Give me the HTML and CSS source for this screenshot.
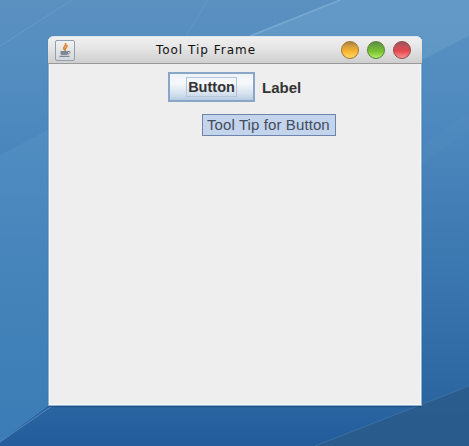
FILE: index.html
```html
<!DOCTYPE html>
<html lang="en">
<head>
    <meta charset="UTF-8">
    <meta name="viewport" content="width=device-width, initial-scale=1.0">
    <title>Tool Tip Frame</title>
    <link rel="stylesheet" href="styles.css">
</head>
<body>

    <div class="desktop">
        <!-- wallpaper streaks -->
        <svg class="wallpaper" viewBox="0 0 469 446" width="469" height="446">
            <defs>
                <linearGradient id="leftBand" x1="0" y1="0" x2="0" y2="1">
                    <stop offset="0" stop-color="#5b9bcb" stop-opacity="0.3"/>
                    <stop offset="1" stop-color="#4a90c8" stop-opacity="0.6"/>
                </linearGradient>
            </defs>
            <path d="M250 36L340 0H469V36L422 60V36Z" fill="#6fa3cc" opacity="0.45"/>
            <path d="M0 46L72 0" stroke="#8bb8da" stroke-width="1" fill="none" opacity="0.3"/>
            <path d="M186 36L208 0" stroke="#7eabd0" stroke-width="1" fill="none" opacity="0.3"/>
            <path d="M250 36L340 0" stroke="#8fbbdc" stroke-width="1.5" fill="none" opacity="0.55"/>
            <path d="M0 155L48 130V406L0 442Z" fill="url(#leftBand)"/>
            <path d="M422 146L469 112V130L422 165Z" fill="#5a8fbe" opacity="0.2"/>
            <path d="M0 442L52 406" stroke="#7fb0d6" stroke-width="1" fill="none" opacity="0.5"/>
            <path d="M315 446L469 386V446Z" fill="#2a5a8a" opacity="0.85"/>
            <path d="M315 446L469 386" stroke="#4d83b5" stroke-width="1" fill="none" opacity="0.5"/>
        </svg>

        <div class="frame">
            <div class="titlebar">
                <div class="app-icon">
                    <svg viewBox="0 0 16 16" width="16" height="16">
                        <path d="M8.5 1C9.8 3.5 6.3 4.5 6.8 6.5C7.1 7.6 8 8.2 8 8.2C7.6 6.5 10.8 5 10 3" fill="none" stroke="#dc7a30" stroke-width="1.5"/>
                        <path d="M3.5 9H11V11.5C11 12.5 10 13 9 13H5.5C4.5 13 3.5 12.5 3.5 11.5Z" fill="#7d8795"/>
                        <path d="M11 9.5H12.5C13.5 9.5 13.5 11.5 11 12" fill="none" stroke="#6b7f93"/>
                        <path d="M2.5 14.3H12.5" stroke="#5f7387" stroke-width="1"/>
                    </svg>
                </div>
                <div class="frame-title">Tool Tip Frame</div>
                <div class="controls">
                    <span class="orb orb-min"></span>
                    <span class="orb orb-max"></span>
                    <span class="orb orb-close"></span>
                </div>
            </div>
            <div class="content">
                <div class="row">
                    <button class="btn"><span class="btn-focus">Button</span></button>
                    <span class="label">Label</span>
                </div>
                <div class="tooltip">Tool Tip for Button</div>
            </div>
        </div>
    </div>

</body>
</html>
```

FILE: styles.css
```css
html, body { margin: 0; padding: 0; }
body { width: 469px; height: 446px; overflow: hidden; font-family: "Liberation Sans", Arial, sans-serif; }

.desktop {
    position: relative; width: 469px; height: 446px; box-sizing: border-box; padding: 36px 47px 40px 48px;
    background: linear-gradient(180deg, #5a91c1 0%, #4f8abf 25%, #3b77b0 60%, #2c67a2 88%, #245c9c 100%);
}
.wallpaper { position: absolute; left: 0; top: 0; }

.frame {
    position: relative; height: 370px; display: flex; flex-direction: column; background: #eeeeee;
    border-radius: 6px 6px 0 0;
    box-shadow: inset 0 0 0 1px #8fb0d2, inset 0 0 0 2px #f8f8f8, 0 1px 1px rgba(20, 50, 90, 0.4);
}

.titlebar {
    height: 26px; display: flex; align-items: center; padding: 0 11px 0 7px; border-bottom: 1px solid #9a9a9a;
    border-radius: 6px 6px 0 0; border-top: 1px solid #dfe6ec;
    background: linear-gradient(180deg, #f0f0f0 0%, #e4e4e4 45%, #cfcfcf 100%);
}
.app-icon {
    width: 18px; height: 19px; display: flex; align-items: center; justify-content: center;
    border: 1px solid #8ea0b5; border-radius: 2px; background: linear-gradient(180deg, #f4f2f0, #d4d6d8);
}
.frame-title { flex: 1; text-align: center; font-family: "DejaVu Sans", sans-serif; font-size: 12px; letter-spacing: 1px; color: #111; padding-right: 4px; }
.controls { display: flex; gap: 8px; }
.orb { width: 18px; height: 18px; border-radius: 50%; box-sizing: border-box; border: 1px solid #777; }
.orb-min { background: linear-gradient(180deg, #a8813e 0%, #d9a13f 30%, #f7b32e 55%, #ffd768 100%); border-color: #a5762a; }
.orb-max { background: linear-gradient(180deg, #5f8d4a 0%, #6cab3c 30%, #73c02e 55%, #b4ea66 100%); border-color: #54803a; }
.orb-close { background: linear-gradient(180deg, #97545a 0%, #c9505a 30%, #e4464e 55%, #fb9090 100%); border-color: #8f4a4a; }

.content { flex: 1; display: flex; flex-direction: column; align-items: flex-start; padding: 8px 0 0 120px; }
.row { display: flex; align-items: center; gap: 7px; }

.btn {
    width: 87px; height: 30px; padding: 0; display: flex; align-items: center; justify-content: center;
    border: 2px solid #8aa6c6; background: linear-gradient(180deg, #eef3f9 0%, #f6f8fb 35%, #d6e2ef 75%, #b8cde2 100%);
    font-family: inherit; font-size: 14.5px; font-weight: bold; color: #333;
}
.btn-focus { border: 1px solid #b4c6da; padding: 1px 1px; line-height: 16px; }
.label { font-size: 15px; font-weight: bold; color: #333; }

.tooltip {
    margin: 12px 0 0 34px; height: 22px; box-sizing: border-box; padding: 0 5px 0 4px; line-height: 20px; border: 1px solid #6d84ad;
    background: #c3d4ec; font-size: 15px; letter-spacing: 0.1px; color: #434d5b; white-space: nowrap;
}
```
